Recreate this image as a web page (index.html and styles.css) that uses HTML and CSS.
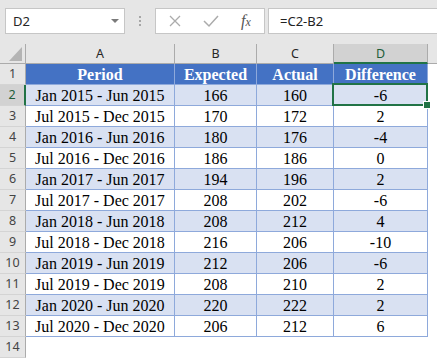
FILE: index.html
```html
<!DOCTYPE html>
<html>
<head>
<meta charset="utf-8">
<link rel="stylesheet" href="styles.css">
</head>
<body>
<div class="toolbar">
  <div class="namebox"><span>D2</span><svg class="dd" width="8" height="5" viewBox="0 0 8 5"><path d="M0 0H8L4 4Z" fill="#7a7a7a"/></svg></div>
  <div class="dots"><i></i><i></i><i></i></div>
  <div class="fbtns">
    <svg class="ico" width="14" height="14" viewBox="0 0 14 14"><path d="M2 2L12 12M12 2L2 12" stroke="#ababab" stroke-width="1.3" fill="none"/></svg>
    <svg class="ico" width="18" height="14" viewBox="0 0 18 14"><path d="M2 7L7 12L16 2" stroke="#ababab" stroke-width="1.5" fill="none"/></svg>
    <span class="fx"><span class="f">f</span><span class="x">x</span></span>
  </div>
  <div class="formula">=C2-B2</div>
</div>
<div class="sheet">
  <div class="corner"><svg width="13" height="14" viewBox="0 0 13 14"><path d="M13 0V14H0Z" fill="#b4b4b4"/></svg></div>
  <div class="ch">A</div>
  <div class="ch">B</div>
  <div class="ch">C</div>
  <div class="ch chsel">D</div>
  <div class="ch chfill"></div>

  <div class="rh">1</div>
  <div class="c hd">Period</div><div class="c hd">Expected</div><div class="c hd">Actual</div><div class="c hd">Difference</div><div class="fill"></div>

  <div class="rh rhsel">2</div>
  <div class="c band">Jan 2015 - Jun 2015</div><div class="c band">166</div><div class="c band">160</div><div class="c band sel">-6</div><div class="fill"></div>

  <div class="rh">3</div>
  <div class="c">Jul 2015 - Dec 2015</div><div class="c">170</div><div class="c">172</div><div class="c">2</div><div class="fill"></div>

  <div class="rh">4</div>
  <div class="c band">Jan 2016 - Jun 2016</div><div class="c band">180</div><div class="c band">176</div><div class="c band">-4</div><div class="fill"></div>

  <div class="rh">5</div>
  <div class="c">Jul 2016 - Dec 2016</div><div class="c">186</div><div class="c">186</div><div class="c">0</div><div class="fill"></div>

  <div class="rh">6</div>
  <div class="c band">Jan 2017 - Jun 2017</div><div class="c band">194</div><div class="c band">196</div><div class="c band">2</div><div class="fill"></div>

  <div class="rh">7</div>
  <div class="c">Jul 2017 - Dec 2017</div><div class="c">208</div><div class="c">202</div><div class="c">-6</div><div class="fill"></div>

  <div class="rh">8</div>
  <div class="c band">Jan 2018 - Jun 2018</div><div class="c band">208</div><div class="c band">212</div><div class="c band">4</div><div class="fill"></div>

  <div class="rh">9</div>
  <div class="c">Jul 2018 - Dec 2018</div><div class="c">216</div><div class="c">206</div><div class="c">-10</div><div class="fill"></div>

  <div class="rh">10</div>
  <div class="c band">Jan 2019 - Jun 2019</div><div class="c band">212</div><div class="c band">206</div><div class="c band">-6</div><div class="fill"></div>

  <div class="rh">11</div>
  <div class="c">Jul 2019 - Dec 2019</div><div class="c">208</div><div class="c">210</div><div class="c">2</div><div class="fill"></div>

  <div class="rh">12</div>
  <div class="c band">Jan 2020 - Jun 2020</div><div class="c band">220</div><div class="c band">222</div><div class="c band">2</div><div class="fill"></div>

  <div class="rh">13</div>
  <div class="c">Jul 2020 - Dec 2020</div><div class="c">206</div><div class="c">212</div><div class="c">6</div><div class="fill"></div>

  <div class="rh">14</div>
  <div class="fill"></div><div class="fill"></div><div class="fill"></div><div class="fill"></div><div class="fill"></div>
</div>
</body>
</html>
```

FILE: styles.css
```css
* { box-sizing: border-box; margin: 0; padding: 0; }
html, body { margin: 0; background: #fff; }
body { width: 437px; height: 358px; overflow: hidden; font-family: "Noto Sans", sans-serif; }

.toolbar {
  height: 44px;
  background: #e6e6e6;
  display: flex;
  align-items: flex-start;
  padding: 8px 0 0 5px;
  overflow: hidden;
}
.namebox {
  width: 120px;
  height: 26px;
  background: #fff;
  border: 1px solid #c6c6c6;
  display: flex;
  align-items: center;
  justify-content: space-between;
  padding: 0 5px 0 7px;
  font-size: 13px;
  color: #262626;
}
.dots {
  width: 30px;
  display: flex;
  flex-direction: column;
  align-items: center;
  gap: 2px;
  padding-top: 8px;
}
.dots i { display: block; width: 2px; height: 2px; background: #a6a6a6; }
.fbtns {
  width: 110px;
  height: 26px;
  background: #fff;
  border: 1px solid #c6c6c6;
  display: flex;
  align-items: center;
  padding-left: 12px;
  gap: 20px;
}
.fx { font-family: "Liberation Serif", serif; font-style: italic; color: #555; margin-left: 1px; }
.fx .f { font-size: 16px; }
.fx .x { font-size: 12px; }
.formula {
  flex: 1;
  margin-left: 3px;
  margin-right: -2px;
  height: 26px;
  background: #fff;
  border: 1px solid #c6c6c6;
  padding-left: 11px;
  font-size: 13px;
  line-height: 24px;
  color: #222;
}

.sheet {
  display: grid;
  grid-template-columns: 26px 149px 82px 77px 94px 1fr;
  grid-template-rows: 20px;
  grid-auto-rows: 21px;
}
.corner {
  background: #e6e6e6;
  border-right: 1px solid #ababab;
  border-bottom: 1px solid #ababab;
  display: flex;
  align-items: flex-end;
  justify-content: flex-end;
  padding: 0 3px 2px 0;
}
.corner svg { display: block; }
.ch {
  background: #e6e6e6;
  border-right: 1px solid #ababab;
  border-bottom: 1px solid #ababab;
  font-size: 12.5px;
  color: #262626;
  text-align: center;
  line-height: 19px;
}
.ch.chsel { background: #d2d2d2; border-bottom: 2px solid #217346; color: #1e5e3a; }
.ch.chfill { border-right: none; }
.rh {
  background: #e6e6e6;
  border-right: 1px solid #ababab;
  border-bottom: 1px solid #d4d4d4;
  font-size: 12.5px;
  color: #444;
  text-align: center;
  line-height: 20px;
}
.rh.rhsel { background: #d2d2d2; border-right: 2px solid #217346; color: #1e5e3a; }

.c {
  border-right: 1px solid #8ea9db;
  border-bottom: 1px solid #8ea9db;
  font-family: "Liberation Serif", "Times New Roman", serif;
  font-size: 16px;
  color: #000;
  text-align: center;
  line-height: 20px;
  padding-top: 1px;
  white-space: nowrap;
}
.c.hd { background: #4472c4; color: #fff; font-weight: bold; }
.c.band { background: #d9e1f2; }
.c.sel { position: relative; }
.c.sel::after {
  content: "";
  position: absolute;
  left: -2px; top: -2px; right: -1px; bottom: -1px;
  border: 2px solid #217346;
}
.c.sel::before {
  content: "";
  position: absolute;
  right: -4px; bottom: -4px;
  width: 6px; height: 6px;
  background: #217346;
  border: 1px solid #fff;
  z-index: 2;
}
.fill { background: #fff; }
```
